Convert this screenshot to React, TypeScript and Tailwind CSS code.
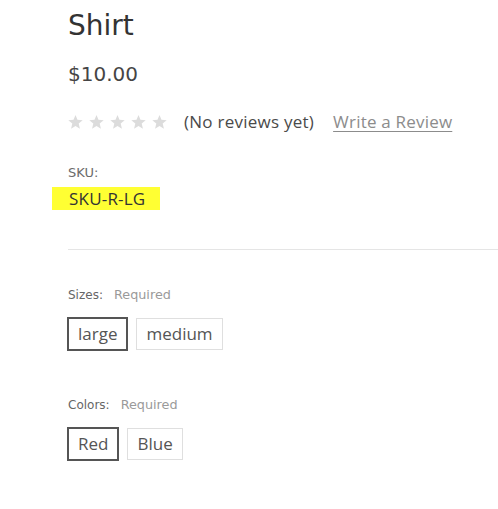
import React from 'react'

const HEAD = { fontFamily: '"DejaVu Sans", Verdana, sans-serif' }
const BODY = { fontFamily: '"Open Sans", Arial, sans-serif' }

type Option = { label: string; selected?: boolean }

const SIZES: Option[] = [{ label: 'large', selected: true }, { label: 'medium' }]
const COLORS: Option[] = [{ label: 'Red', selected: true }, { label: 'Blue' }]

function Star() {
  return (
    <svg width="15" height="14" viewBox="0.5 0 23 22" className="fill-[#dcdcdc]">
      <path d="M12 0l3.09 7.6 8.2.62-6.28 5.33 1.96 8.02L12 17.2l-6.97 4.37 1.96-8.02L.71 8.22l8.2-.62z" />
    </svg>
  )
}

function OptionGroup({ title, options, mt }: { title: string; options: Option[]; mt: string }) {
  return (
    <div className={mt}>
      <div className="flex h-4 items-center gap-[11px] text-[12px] leading-4" style={HEAD}>
        <span className="text-[#666]">{title}</span>
        <span className="text-[12.8px] text-[#9a9a9a]">Required</span>
      </div>
      <div className="mt-[15px] flex gap-[9px]">
        {options.map((opt) => (
          <button
            key={opt.label}
            type="button"
            className={`flex h-8 items-center border px-[9px] text-[17px] text-[#555] ${
              opt.selected ? 'border-[#555] ring-1 ring-[#555]' : 'border-[#dfdfdf]'
            }`}
            style={BODY}
          >
            {opt.label}
          </button>
        ))}
      </div>
    </div>
  )
}

export default function App() {
  return (
    <div className="h-[509px] w-[498px] overflow-hidden bg-white pl-[68px]">
      <h1 className="h-[51px] text-[28px] leading-[51px] text-[#333]" style={HEAD}>
        Shirt
      </h1>
      <div className="h-[46px] text-[20px] leading-[46px] text-[#454545]" style={HEAD}>
        $10.00
      </div>

      <div className="flex h-[50px] items-center" style={BODY}>
        <div className="flex gap-[6px]">
          {[0, 1, 2, 3, 4].map((i) => (
            <Star key={i} />
          ))}
        </div>
        <span className="ml-[17px] text-[17px] tracking-[0.25px] text-[#4a4a4a]">(No reviews yet)</span>
        <a className="ml-[19px] text-[17px] tracking-[0.2px] text-[#8c8c8c] underline underline-offset-[3px]" href="#">
          Write a Review
        </a>
      </div>

      <div className="mt-[18px] text-[13px] leading-4 text-[#6b6b6b]" style={HEAD}>
        SKU:
      </div>
      <div
        className="-ml-4 mt-[6px] inline-flex h-[23px] w-[108px] items-center bg-[#ffff33] pl-[17px] text-[17px] tracking-[0.2px] text-[#333]"
        style={BODY}
      >
        SKU-R-LG
      </div>

      <div className="mt-[38px] border-t border-[#e5e5e5]" />

      <OptionGroup title="Sizes:" options={SIZES} mt="mt-[37px]" />
      <OptionGroup title="Colors:" options={COLORS} mt="mt-[47px]" />
    </div>
  )
}
